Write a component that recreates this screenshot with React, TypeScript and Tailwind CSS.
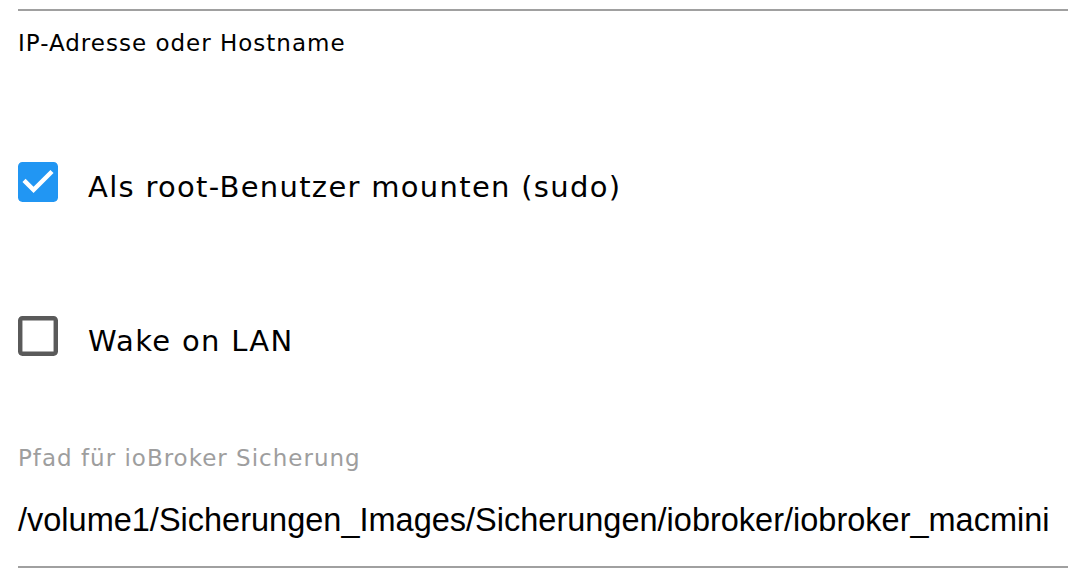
import React from 'react'

const uiFont = { fontFamily: '"DejaVu Sans", Verdana, sans-serif' }

function CheckedBox() {
  return (
    <svg viewBox="3 3 18 18" className="h-[40px] w-[40px] shrink-0">
      <path
        fill="#2196f3"
        d="M19 3H5c-1.11 0-2 .9-2 2v14c0 1.1.89 2 2 2h14c1.11 0 2-.9 2-2V5c0-1.1-.89-2-2-2zm-9 14l-5-5 1.41-1.41L10 14.17l7.59-7.59L19 8l-9 9z"
      />
    </svg>
  )
}

function EmptyBox() {
  return (
    <svg viewBox="3 3 18 18" className="h-[40px] w-[40px] shrink-0">
      <path
        fill="#5a5a5a"
        d="M19 5v14H5V5h14m0-2H5c-1.1 0-2 .9-2 2v14c0 1.1.9 2 2 2h14c1.1 0 2-.9 2-2V5c0-1.1-.9-2-2-2z"
      />
    </svg>
  )
}

function CheckRow({ checked, label }: { checked: boolean; label: string }) {
  return (
    <label className="flex h-[60px] items-center gap-[30px]">
      {checked ? <CheckedBox /> : <EmptyBox />}
      <span className="mt-[10px] text-[29px] leading-none tracking-[1.3px] text-black" style={uiFont}>
        {label}
      </span>
    </label>
  )
}

export default function App() {
  return (
    <div className="h-[572px] w-[1068px] overflow-hidden bg-white pl-[18px]">
      {/* IP field (bottom part) */}
      <div className="mt-[9px] border-t-2 border-[#a0a0a0]" />
      <div className="flex h-[64px] items-center">
        <span className="text-[23px] leading-none tracking-[1px] text-black" style={uiFont}>
          IP-Adresse oder Hostname
        </span>
      </div>

      {/* Options */}
      <div className="mt-[77px]">
        <CheckRow checked label="Als root-Benutzer mounten (sudo)" />
      </div>
      <div className="mt-[94px]">
        <CheckRow checked={false} label="Wake on LAN" />
      </div>

      {/* Backup path */}
      <div className="mt-[72px] flex h-[40px] items-center">
        <span className="text-[23px] leading-none tracking-[1px] text-[#9e9e9e]" style={uiFont}>
          Pfad für ioBroker Sicherung
        </span>
      </div>
      <div className="mt-[12px] flex h-[60px] items-center">
        <span
          className="text-[32.5px] leading-none text-black"
          style={{ fontFamily: '"Liberation Sans", Arial, sans-serif' }}
        >
          /volume1/Sicherungen_Images/Sicherungen/iobroker/iobroker_macmini
        </span>
      </div>
      <div className="mt-[16px] border-t-2 border-[#a0a0a0]" />
    </div>
  )
}
